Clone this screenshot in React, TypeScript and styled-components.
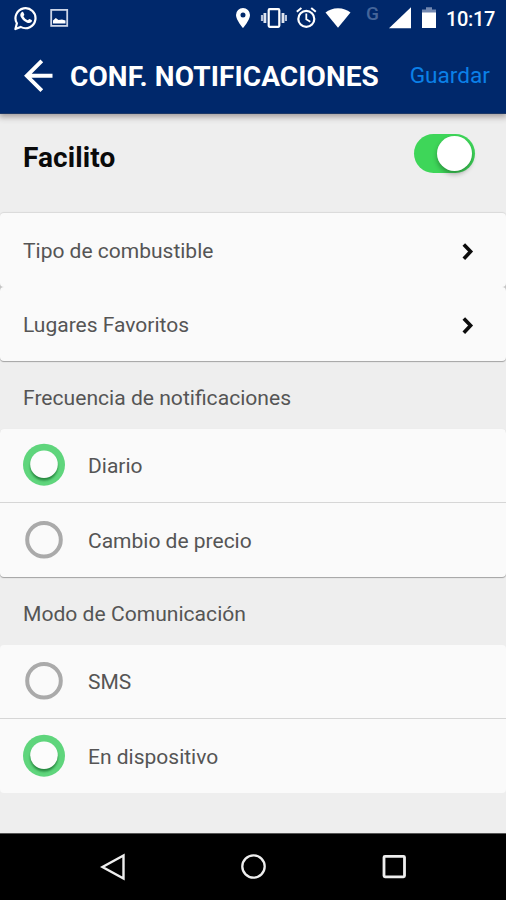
import React, { useState } from "react";
import styled, { createGlobalStyle } from "styled-components";

const GlobalStyle = createGlobalStyle`
  * { box-sizing: border-box; }
  body { margin: 0; background: #000; font-family: Roboto, "Noto Sans", sans-serif; }
  button { border: 0; padding: 0; margin: 0; background: none; font: inherit; color: inherit; text-align: left; }
  svg { display: block; flex: none; }
`;

const Screen = styled.div`
  width: 506px;
  height: 900px;
  display: flex;
  flex-direction: column;
  overflow: hidden;
  background: #eeeeee;
`;

const Top = styled.header`
  position: relative;
  height: 114px;
  flex: none;
  background: #00286b;
  border-bottom: 1px solid #1c3766;
  box-shadow: 0 2px 6px 1px rgba(60, 45, 45, 0.42);
  color: #fff;
`;

const StatusBar = styled.div`
  height: 38px;
  display: flex;
  justify-content: space-between;
  padding: 0 10px 0 14px;
`;

const StatusGroup = styled.div<{ $gap: number }>`
  display: flex;
  align-items: flex-start;
  gap: ${(p) => p.$gap}px;
`;

const Spaced = styled.span<{ $left?: number; $right?: number }>`
  margin: 0 ${(p) => p.$right ?? 0}px 0 ${(p) => p.$left ?? 0}px;
`;

const Network = styled.span`
  width: 14px;
  margin: 3px 1px 0 7px;
  font-size: 19px;
  line-height: 22px;
  font-weight: 500;
  color: #45659a;
`;

const Clock = styled.time`
  width: 50px;
  font-size: 20px;
  line-height: 38px;
  font-weight: 500;
  letter-spacing: -0.35px;
  white-space: nowrap;
`;

const AppBar = styled.div`
  height: 75px;
  display: flex;
  align-items: center;
  padding: 0 16px 0 23px;
`;

const Title = styled.h1`
  margin: 2px 0 0 17px;
  font-size: 28px;
  line-height: 32px;
  font-weight: 700;
  letter-spacing: 0.1px;
  white-space: nowrap;
`;

const Save = styled.button`
  margin-left: auto;
  color: #0b80e8;
  font-size: 22.6px;
  line-height: 30px;
`;

const MasterRow = styled.div`
  height: 99px;
  flex: none;
  display: flex;
  justify-content: space-between;
  align-items: flex-start;
  padding: 20px 31px 0 23px;
`;

const MasterLabel = styled.h2`
  margin: 8px 0 0;
  color: #0a0a0a;
  font-size: 28px;
  line-height: 32px;
  font-weight: 700;
  letter-spacing: 0.1px;
`;

const Toggle = styled.button<{ $on: boolean }>`
  width: 61px;
  height: 39px;
  display: flex;
  align-items: center;
  justify-content: ${(p) => (p.$on ? "flex-end" : "flex-start")};
  padding: 0 3px;
  border-radius: 20px;
  background: ${(p) => (p.$on ? "#3ed659" : "#b0b0b0")};
`;

const Knob = styled.span`
  width: 35px;
  height: 35px;
  border-radius: 50%;
  background: #fff;
  box-shadow: 0 3px 5px rgba(0, 0, 0, 0.32);
`;

const Card = styled.section<{ $edge: "top" | "bottom" | "both" | "none" }>`
  flex: none;
  border-radius: 4px;
  background: #fafafa;
  box-shadow: ${(p) =>
    ({
      top: "0 -1px 1px rgba(0,0,0,.09)",
      bottom: "0 1px 1px rgba(0,0,0,.32)",
      both: "0 1px 1px rgba(0,0,0,.32), 0 0 1px rgba(0,0,0,.06)",
      none: "none",
    })[p.$edge]};
`;

const LinkGroup = styled.div`
  flex: none;
  background: linear-gradient(#eeeeee 0 40px, #c4c4c4 40px 108px, #eeeeee 108px);
`;

const LinkRow = styled.button`
  width: 100%;
  height: 74px;
  display: flex;
  justify-content: space-between;
  align-items: center;
  padding: 1px 32px 0 23px;
`;

const Label = styled.span`
  color: #555;
  font-size: 21px;
  line-height: 26px;
  white-space: nowrap;
`;

const SectionHeader = styled.div`
  height: 68px;
  flex: none;
  display: flex;
  align-items: center;
  padding: 6px 23px 0;
`;

const SectionLabel = styled(Label)`
  font-size: 21.1px;
`;

const Option = styled.button<{ $tall?: boolean }>`
  width: 100%;
  height: ${(p) => (p.$tall ? 75 : 73)}px;
  display: flex;
  align-items: center;
  gap: 23px;
  padding: ${(p) => (p.$tall ? "1px 23px 0" : "0 23px 1px")};
  & + & { box-shadow: inset 0 1px #d6d6d6; }
`;

const OptionLabel = styled(Label)`
  margin-top: 2px;
`;

const Nav = styled.nav`
  height: 67px;
  flex: none;
  margin-top: auto;
  display: flex;
  align-items: center;
  justify-content: center;
  gap: 114px;
  border-top: 1px solid #555;
  background: #000;
`;

const WhatsApp = () => (
  <svg width="24" height="38" viewBox="14 0 24 38" fill="none">
    <path d="M15.400 29l1.500-5.700A10 10 0 1 1 20.600 26.900z" stroke="#fff" strokeWidth="2.200" strokeLinejoin="round" />
    <path d="M21.600 12.200c.8-.7 1.500-.5 1.800.2l.9 2c.2.7-.8 1.300-.9 1.800 1 2 2.300 3.200 4.300 4 .8-.2 1.200-1.500 1.900-1.300l2 1c.7.4.4 1.500-.2 2.100-1.200 1.200-3 1.200-4.700.4-3-1.300-5-3.400-6-5.600-.8-1.800-.4-3.500.9-4.600z" fill="#fff" />
  </svg>
);

const Picture = () => (
  <svg width="19" height="38" viewBox="50 0 19 38">
    <rect x="51.200" y="9.900" width="16" height="16" stroke="#ccd5e7" strokeWidth="1.800" fill="none" />
    <path d="M53 23.500v-3l2.800-2.500 2.700 1.900 3.500-.4 3.500 1v3z" fill="#fff" />
  </svg>
);

const Pin = () => (
  <svg width="14" height="38" viewBox="236 0 14 38">
    <path fillRule="evenodd" fill="#fff" d="M243 8a7 7 0 0 0-7 7c0 5 7 13 7 13s7-8 7-13a7 7 0 0 0-7-7zm0 4.500a2.500 2.500 0 1 1 0 5 2.500 2.500 0 0 1 0-5z" />
  </svg>
);

const Vibrate = () => (
  <svg width="27" height="38" viewBox="260 0 27 38">
    <rect x="268.700" y="9.200" width="10.600" height="17.600" rx="1" stroke="#fff" strokeWidth="2.200" fill="none" />
    <path d="M264.900 13v10M283 13v10" stroke="#dfe5f0" strokeWidth="2.800" />
    <path d="M262 15v6M286 15v6" stroke="#b8c4db" strokeWidth="2.200" />
  </svg>
);

const Alarm = () => (
  <svg width="22" height="38" viewBox="295 0 22 38" stroke="#fff" fill="none">
    <circle cx="306.300" cy="18.900" r="8" strokeWidth="2.200" />
    <path d="M306.300 13.500v5.700l4 2.500" strokeWidth="1.800" />
    <path d="M296.800 11.800l4.600-3.800M315.800 11.800l-4.600-3.800" strokeWidth="2" />
  </svg>
);

const Wifi = () => (
  <svg width="26" height="38" viewBox="325 0 26 38">
    <path fill="#fff" d="M338 27.800l-12.500-15.300c3.300-2.700 7.500-4.300 12.500-4.300s9.200 1.600 12.500 4.300z" />
  </svg>
);

const Signal = () => (
  <svg width="22" height="38" viewBox="389 0 22 38">
    <path fill="#fff" d="M389 28.200l22-21v21z" />
  </svg>
);

const Battery = () => (
  <svg width="14" height="38" viewBox="422 0 14 38">
    <path fill="#7388b0" d="M422 13V9.500h4V7.300h6v2.200h4V13z" />
    <path fill="#fff" d="M422 12.500h14V28h-14z" />
  </svg>
);

const BackArrow = () => (
  <svg width="30" height="34" viewBox="23.500 58.500 30 34" fill="none" stroke="#fff" strokeWidth="3.900">
    <path d="M42.300 60.400L27.300 75.300l15 14.900M27 75.300h26" />
  </svg>
);

const Chevron = () => (
  <svg width="13" height="20" viewBox="0 -0.500 13 20" fill="none" stroke="#0c0c0c" strokeWidth="3.600">
    <path d="M2.800 2.900l6.800 7.200-6.800 7.200" />
  </svg>
);

const Radio = ({ checked }: { checked: boolean }) => (
  <svg width="42" height="44" viewBox="0 0 42 44" fill="none">
    {checked ? (
      <>
        <defs>
          <filter id="soft" x="-30%" y="-30%" width="160%" height="160%">
            <feGaussianBlur stdDeviation="1.300" />
          </filter>
        </defs>
        <circle cx="21" cy="21.700" r="21" fill="#5fd57c" />
        <circle cx="21" cy="23.700" r="13.700" fill="#27883f" filter="url(#soft)" />
        <circle cx="21" cy="21.300" r="13.800" fill="#fcfcfc" />
      </>
    ) : (
      <circle cx="21" cy="21.700" r="16.800" stroke="#aaa" strokeWidth="4" />
    )}
  </svg>
);

const frequencies = ["Diario", "Cambio de precio"];
const channels = ["SMS", "En dispositivo"];

export default function App() {
  const [enabled, setEnabled] = useState(true);
  const [frequency, setFrequency] = useState("Diario");
  const [channel, setChannel] = useState("En dispositivo");

  return (
    <>
      <GlobalStyle />
      <Screen>
        <Top>
          <StatusBar>
            <StatusGroup $gap={12}>
              <WhatsApp />
              <Picture />
            </StatusGroup>
            <StatusGroup $gap={8}>
              <Spaced $right={2}><Pin /></Spaced>
              <Vibrate />
              <Alarm />
              <Wifi />
              <Network>G</Network>
              <Signal />
              <Spaced $left={3} $right={2}><Battery /></Spaced>
              <Clock>10:17</Clock>
            </StatusGroup>
          </StatusBar>
          <AppBar>
            <button aria-label="Atrás"><BackArrow /></button>
            <Title>CONF. NOTIFICACIONES</Title>
            <Save>Guardar</Save>
          </AppBar>
        </Top>
        <MasterRow>
          <MasterLabel>Facilito</MasterLabel>
          <Toggle $on={enabled} role="switch" aria-checked={enabled} aria-label="Facilito" onClick={() => setEnabled(!enabled)}>
            <Knob />
          </Toggle>
        </MasterRow>
        <LinkGroup>
          <Card $edge="top">
            <LinkRow><Label>Tipo de combustible</Label><Chevron /></LinkRow>
          </Card>
          <Card $edge="bottom">
            <LinkRow><Label>Lugares Favoritos</Label><Chevron /></LinkRow>
          </Card>
        </LinkGroup>
        <SectionHeader><SectionLabel>Frecuencia de notificaciones</SectionLabel></SectionHeader>
        <Card $edge="both">
          {frequencies.map((name, i) => (
            <Option key={name} $tall={i > 0} role="radio" aria-checked={frequency === name} onClick={() => setFrequency(name)}>
              <Radio checked={frequency === name} />
              <OptionLabel>{name}</OptionLabel>
            </Option>
          ))}
        </Card>
        <SectionHeader><SectionLabel>Modo de Comunicación</SectionLabel></SectionHeader>
        <Card $edge="none">
          {channels.map((name, i) => (
            <Option key={name} $tall={i > 0} role="radio" aria-checked={channel === name} onClick={() => setChannel(name)}>
              <Radio checked={channel === name} />
              <OptionLabel>{name}</OptionLabel>
            </Option>
          ))}
        </Card>
        <Nav>
          <svg width="26" height="28" viewBox="0 0 26 28" fill="none" stroke="#eee" strokeWidth="2.400">
            <path d="M23.500 2.500v23L2.500 14z" />
          </svg>
          <svg width="26" height="28" viewBox="0 0 26 28" fill="none" stroke="#eee" strokeWidth="2.300">
            <circle cx="13.500" cy="13.500" r="11.200" />
          </svg>
          <svg width="26" height="28" viewBox="0 0 26 28" fill="none" stroke="#eee" strokeWidth="2.800">
            <rect x="4" y="3.300" width="20.500" height="20.500" rx="1" />
          </svg>
        </Nav>
      </Screen>
    </>
  );
}
